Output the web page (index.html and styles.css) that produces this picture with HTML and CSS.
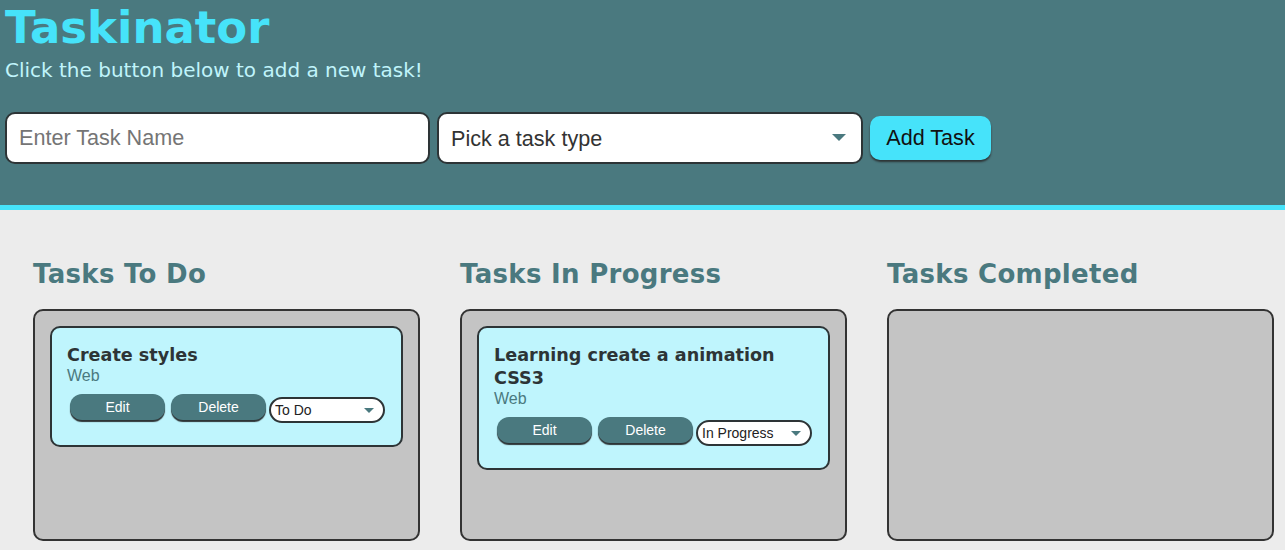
FILE: index.html
```html
<!DOCTYPE html>
<html lang="en">
<head>
<meta charset="utf-8">
<title>Taskinator</title>
<link rel="stylesheet" href="styles.css">
</head>
<body>
<header class="page-header">
  <h1 class="page-title">Taskinator</h1>
  <p class="page-sub">Click the button below to add a new task!</p>
  <form class="task-form">
    <input class="text-input" type="text" placeholder="Enter Task Name">
    <div class="select-wrap select-wrap-lg">
      <select class="type-select">
        <option>Pick a task type</option>
      </select>
    </div>
    <button class="add-btn" type="button">Add Task</button>
  </form>
</header>
<main class="board">
  <section class="column">
    <h2 class="column-title">Tasks To Do</h2>
    <div class="task-list">
      <div class="task-card">
        <h3 class="task-name">Create styles</h3>
        <span class="task-type">Web</span>
        <div class="task-actions">
          <button class="act-btn" type="button">Edit</button>
          <button class="act-btn" type="button">Delete</button>
          <div class="select-wrap select-wrap-sm">
            <select class="status-select"><option>To Do</option></select>
          </div>
        </div>
      </div>
    </div>
  </section>
  <section class="column">
    <h2 class="column-title">Tasks In Progress</h2>
    <div class="task-list">
      <div class="task-card">
        <h3 class="task-name">Learning create a animation CSS3</h3>
        <span class="task-type">Web</span>
        <div class="task-actions">
          <button class="act-btn" type="button">Edit</button>
          <button class="act-btn" type="button">Delete</button>
          <div class="select-wrap select-wrap-sm">
            <select class="status-select"><option>In Progress</option></select>
          </div>
        </div>
      </div>
    </div>
  </section>
  <section class="column">
    <h2 class="column-title">Tasks Completed</h2>
    <div class="task-list"></div>
  </section>
</main>
</body>
</html>
```

FILE: styles.css
```css
* { box-sizing: border-box; }

body {
  margin: 0;
  background: #ececec;
  font-family: "DejaVu Sans", Verdana, sans-serif;
  overflow: hidden;
}

.page-header {
  background: #4a797f;
  height: 210px;
  border-bottom: 5px solid #46e3fa;
  padding: 2px 5px 0 5px;
}

.page-title {
  margin: 0;
  font-size: 45px;
  line-height: 52px;
  font-weight: bold;
  color: #46e3fa;
}

.page-sub {
  margin: 4px 0 0 0;
  font-size: 20px;
  line-height: 24px;
  color: #c0f4fb;
}

.task-form {
  display: flex;
  align-items: flex-start;
  gap: 7px;
  margin-top: 30px;
}

.text-input,
.type-select {
  height: 52px;
  border: 2px solid #2d3436;
  border-radius: 10px;
  background: #fff;
  font-family: "Liberation Sans", Arial, sans-serif;
  font-size: 21.6px;
  padding: 0 12px;
  color: #333;
  outline: none;
}

.text-input { width: 425px; }
.text-input::placeholder { color: #757575; }

.select-wrap { position: relative; }
.select-wrap::after {
  content: "";
  position: absolute;
  width: 0;
  height: 0;
  pointer-events: none;
}

.select-wrap-lg { width: 426px; }
.select-wrap-lg::after {
  right: 17px;
  top: 22px;
  border-left: 7px solid transparent;
  border-right: 7px solid transparent;
  border-top: 7px solid #4a797f;
}

.type-select {
  width: 100%;
  appearance: none;
  -webkit-appearance: none;
}

.add-btn {
  margin-top: 4px;
  width: 121px;
  height: 44px;
  border: none;
  border-radius: 10px;
  background: #46e3fa;
  color: #111;
  font-family: "Liberation Sans", Arial, sans-serif;
  font-size: 21.6px;
  box-shadow: 0 2px 2px #2d3436;
  padding: 0;
}

.board {
  display: grid;
  grid-template-columns: repeat(3, 387px);
  column-gap: 40px;
  padding: 0 0 0 33px;
}

.column-title {
  margin: 49px 0 20px 0;
  font-size: 26px;
  line-height: 30px;
  font-weight: bold;
  letter-spacing: 0.3px;
  color: #4a797f;
}

.task-list {
  height: 232px;
  background: #c4c4c4;
  border: 2px solid #333;
  border-radius: 10px;
  padding: 15px;
}

.task-card {
  background: #bff5fd;
  border: 2px solid #2d3436;
  border-radius: 10px;
  padding: 16px 15px 22px 15px;
}

.task-name {
  margin: 0;
  font-size: 17.6px;
  line-height: 23px;
  font-weight: bold;
  color: #2d3436;
}

.task-type {
  display: block;
  font-family: "Liberation Sans", Arial, sans-serif;
  font-size: 16px;
  line-height: 18.4px;
  color: #4a797f;
}

.task-actions {
  display: flex;
  align-items: flex-start;
  margin-top: 9px;
}

.act-btn {
  width: 95px;
  height: 26px;
  margin: 0 3px;
  border: none;
  border-radius: 12px;
  background: #4a797f;
  color: #fff;
  font-family: "Liberation Sans", Arial, sans-serif;
  font-size: 14px;
  padding: 0;
  box-shadow: 0 2px 1px #2d3436;
}

.select-wrap-sm {
  width: 116px;
  margin-top: 3px;
}
.select-wrap-sm::after {
  right: 11px;
  top: 11px;
  border-left: 5px solid transparent;
  border-right: 5px solid transparent;
  border-top: 5px solid #4a797f;
}

.status-select {
  width: 100%;
  height: 26px;
  appearance: none;
  -webkit-appearance: none;
  background: #fff;
  border: 2px solid #2d3436;
  border-radius: 13px;
  padding: 0 4px;
  font-family: "Liberation Sans", Arial, sans-serif;
  font-size: 14px;
  color: #222;
  outline: none;
}
```
